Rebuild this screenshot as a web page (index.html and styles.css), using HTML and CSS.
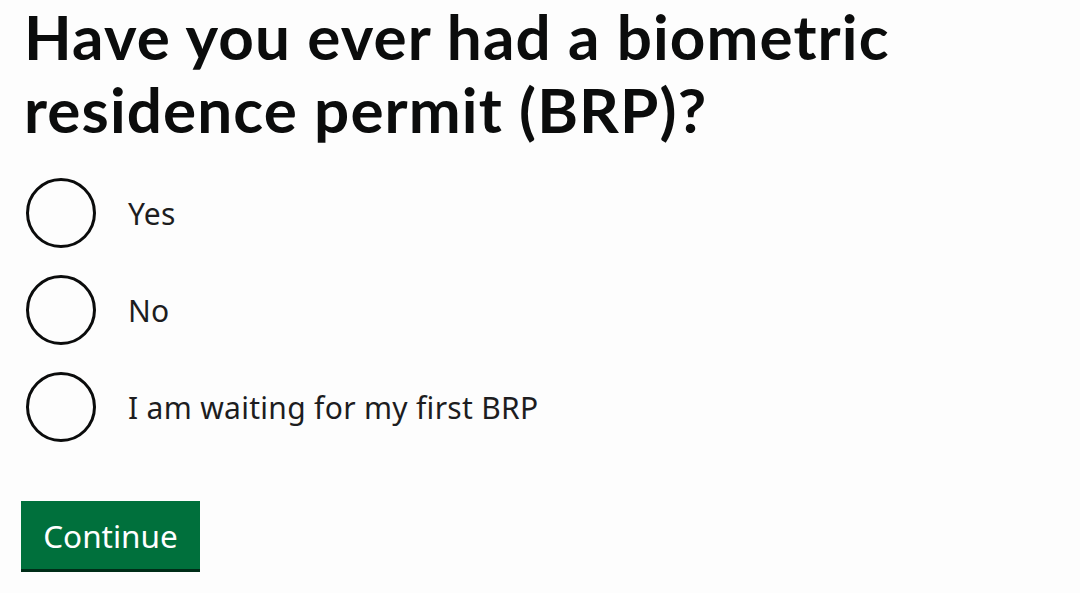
FILE: index.html
```html
<!DOCTYPE html>
<html lang="en">
<head>
    <meta charset="UTF-8">
    <meta name="viewport" content="width=device-width, initial-scale=1.0">
    <title>Biometric residence permit</title>
    <link rel="stylesheet" href="styles.css">
</head>
<body>
    <form class="question-form">
        <h1 class="question-title">Have you ever had a biometric<br>residence permit (BRP)?</h1>
        <div class="radios">
            <label class="radio-item">
                <input type="radio" name="brp" value="yes">
                <span class="radio-mark"></span>
                <span class="radio-label">Yes</span>
            </label>
            <label class="radio-item">
                <input type="radio" name="brp" value="no">
                <span class="radio-mark"></span>
                <span class="radio-label">No</span>
            </label>
            <label class="radio-item">
                <input type="radio" name="brp" value="waiting">
                <span class="radio-mark"></span>
                <span class="radio-label">I am waiting for my first BRP</span>
            </label>
        </div>
        <button type="button" class="continue-btn">Continue</button>
    </form>
</body>
</html>
```

FILE: styles.css
```css
body {
    margin: 0;
    background-color: #fdfdfd;
    font-family: "Noto Sans", Arial, sans-serif;
    color: #0b0c0c;
}
.question-form {
    padding: 0 20px 0 24px;
}
.question-title {
    margin: 0;
    font-family: Lato, "Noto Sans", Arial, sans-serif;
    font-size: 62px;
    line-height: 73px;
    font-weight: 700;
    letter-spacing: 1.1px;
}
.radios {
    display: flex;
    flex-direction: column;
    gap: 27px;
    margin-top: 32px;
}
.radio-item {
    display: flex;
    align-items: center;
    gap: 32px;
    cursor: pointer;
}
.radio-item input {
    display: none;
}
.radio-mark {
    width: 64px;
    height: 64px;
    border: 3px solid #0b0c0c;
    border-radius: 50%;
    margin-left: 2px;
}
.radio-label {
    font-size: 30px;
    letter-spacing: 0.3px;
    color: #1d1d1f;
}
.continue-btn {
    margin-top: 59px;
    margin-left: -3px;
    width: 179px;
    height: 71px;
    padding: 0;
    background-color: #00703c;
    color: #ffffff;
    font-family: "Noto Sans", Arial, sans-serif;
    font-size: 31.5px;
    border: none;
    border-bottom: 3px solid #002d18;
    cursor: pointer;
}
```
